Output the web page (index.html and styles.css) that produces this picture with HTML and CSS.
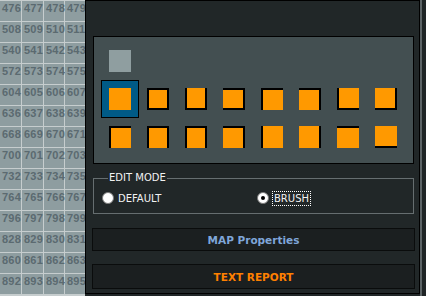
FILE: index.html
```html
<!DOCTYPE html>
<html lang="en">
<head>
  <meta charset="UTF-8" />
  <title>Map Editor</title>
  <meta name="viewport" content="width=device-width, initial-scale=1.0" />
  <link rel="stylesheet" href="styles.css">
</head>
<body>
  <div class="cells">
    <span>476</span><span>477</span><span>478</span><span>479</span>
    <span>508</span><span>509</span><span>510</span><span>511</span>
    <span>540</span><span>541</span><span>542</span><span>543</span>
    <span>572</span><span>573</span><span>574</span><span>575</span>
    <span>604</span><span>605</span><span>606</span><span>607</span>
    <span>636</span><span>637</span><span>638</span><span>639</span>
    <span>668</span><span>669</span><span>670</span><span>671</span>
    <span>700</span><span>701</span><span>702</span><span>703</span>
    <span>732</span><span>733</span><span>734</span><span>735</span>
    <span>764</span><span>765</span><span>766</span><span>767</span>
    <span>796</span><span>797</span><span>798</span><span>799</span>
    <span>828</span><span>829</span><span>830</span><span>831</span>
    <span>860</span><span>861</span><span>862</span><span>863</span>
    <span>892</span><span>893</span><span>894</span><span>895</span>
  </div>

  <div class="panel">
    <div class="tiles">
      <div class="empty"></div>
      <div class="palette">
        <div class="slot selected"><div class="tile"></div></div>
        <div class="slot"><div class="tile bt br bb bl"></div></div>
        <div class="slot"><div class="tile br bb bl"></div></div>
        <div class="slot"><div class="tile bt br bb"></div></div>
        <div class="slot"><div class="tile bt bl"></div></div>
        <div class="slot"><div class="tile bt br"></div></div>
        <div class="slot"><div class="tile bb bl"></div></div>
        <div class="slot"><div class="tile br bb"></div></div>

        <div class="slot"><div class="tile bt bl"></div></div>
        <div class="slot"><div class="tile bt br bl"></div></div>
        <div class="slot"><div class="tile bt br bl"></div></div>
        <div class="slot"><div class="tile bt br"></div></div>
        <div class="slot"><div class="tile bl"></div></div>
        <div class="slot"><div class="tile br"></div></div>
        <div class="slot"><div class="tile bt"></div></div>
        <div class="slot"><div class="tile bb"></div></div>
      </div>
    </div>

    <fieldset class="mode">
      <legend>EDIT MODE</legend>
      <label><input type="radio" name="mode" /> DEFAULT</label>
      <label><input type="radio" name="mode" checked /> <span class="focus">BRUSH</span></label>
    </fieldset>

    <button class="action blue">MAP Properties</button>
    <button class="action orange">TEXT REPORT</button>
  </div>

  <div class="scroll"></div>
</body>
</html>
```

FILE: styles.css
```css
body {
  margin: 0;
  height: 296px;
  overflow: hidden;
  display: flex;
  background-color: #212728;
  font-family: "DejaVu Sans", sans-serif;
  font-size: 10px;
  color: #f2f2f2;
}
.cells {
  width: 85px;
  flex: none;
  display: grid;
  grid-template-columns: 21px 21px 20px 20px;
  grid-auto-rows: 20px;
  gap: 1px;
  padding-top: 1px;
  background-color: #c6cdce;
  align-content: start;
  overflow: hidden;
}
.cells span {
  background-color: #8e9da0;
  color: #5b6a70;
  font-family: "Liberation Sans", Arial, sans-serif;
  font-weight: bold;
  font-size: 11px;
  line-height: 15px;
  letter-spacing: 0.2px;
  padding-left: 2px;
  white-space: nowrap;
}
.panel {
  width: 335px;
  height: 294px;
  flex: none;
  box-sizing: border-box;
  border: 1px solid #000;
  padding: 35px 5px 0 6px;
  display: flex;
  flex-direction: column;
}
.scroll {
  flex: 1;
  border-left: 2px solid #5c6466;
  background-color: #1f2526;
}
.tiles {
  margin: 0 0 0 1px;
  border: 1px solid #000;
  background-color: #434f51;
  padding: 13px 0 7px 7px;
}
.empty {
  width: 22px;
  height: 22px;
  margin: 0 0 8px 8px;
  background-color: #8f9ea0;
}
.palette {
  display: grid;
  grid-template-columns: repeat(8, 38px);
  grid-auto-rows: 38px;
}
.slot {
  display: flex;
  align-items: center;
  justify-content: center;
  box-sizing: border-box;
}
.slot.selected {
  border: 1px solid #000;
  background-color: #005a86;
}
.tile {
  width: 22px;
  height: 22px;
  box-sizing: border-box;
  background-color: #ff9900;
  border: 0 solid #000;
}
.bt { border-top-width: 2px; }
.br { border-right-width: 2px; }
.bb { border-bottom-width: 2px; }
.bl { border-left-width: 2px; }
.mode {
  margin: 8px 0 0 1px;
  padding: 7px 0 8px 8px;
  border: 1px solid #666e70;
  display: grid;
  grid-template-columns: 155px 1fr;
  align-items: center;
}
.mode legend {
  padding: 0 1px;
  margin-left: 6px;
  line-height: 12px;
}
.mode label {
  display: flex;
  align-items: center;
  gap: 4px;
  height: 14px;
}
.mode input {
  appearance: none;
  width: 12px;
  height: 12px;
  margin: 0;
  border-radius: 50%;
  border: 1px solid #7a7a7a;
  background-color: #fff;
  box-sizing: border-box;
  position: relative;
}
.mode input:checked::after {
  content: "";
  position: absolute;
  left: 3px;
  top: 3px;
  width: 4px;
  height: 4px;
  border-radius: 50%;
  background-color: #000;
}
.focus {
  outline: 1px dotted #fff;
  padding: 1px 1px;
}
.action {
  margin: 14px -1px 0 0;
  height: 23px;
  border: 1px solid #0a0c0c;
  background-color: #1b1f20;
  font-family: "DejaVu Sans", sans-serif;
  font-size: 10.5px;
  font-weight: bold;
  padding-top: 2px;
}
.action + .action {
  margin-top: 13px;
  height: 25px;
}
.blue {
  color: #7fa6d9;
}
.orange {
  color: #ff8000;
}
```
